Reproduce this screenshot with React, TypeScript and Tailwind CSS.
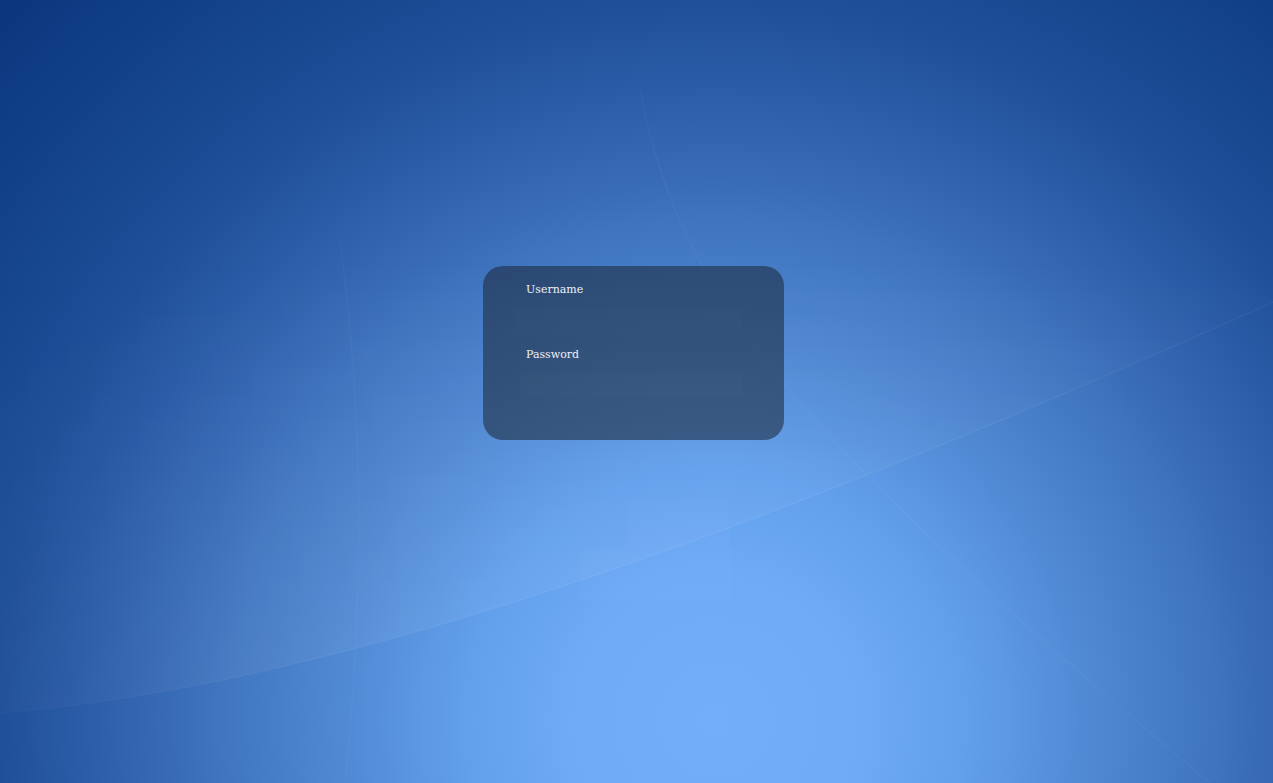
export default function App() {
  return (
    <div className="relative w-full h-[783px] overflow-hidden bg-[#2f64b2]" style={{ fontFamily: '"DejaVu Serif", "Liberation Serif", serif' }}>
      {/* Wallpaper */}
      <svg className="absolute inset-0 w-full h-full" viewBox="0 0 1273 783" preserveAspectRatio="none">
        <defs>
          <radialGradient id="bg" gradientUnits="userSpaceOnUse" cx="715" cy="720" r="1000">
            <stop offset="0" stopColor="#72aefa" />
            <stop offset="0.15" stopColor="#6eaaf6" />
            <stop offset="0.25" stopColor="#62a0ec" />
            <stop offset="0.38" stopColor="#5088d2" />
            <stop offset="0.48" stopColor="#4278c2" />
            <stop offset="0.56" stopColor="#3668b4" />
            <stop offset="0.64" stopColor="#2a5ba6" />
            <stop offset="0.72" stopColor="#1f4f98" />
            <stop offset="0.8" stopColor="#184890" />
            <stop offset="1" stopColor="#0b377e" />
          </radialGradient>
          <linearGradient id="sheen" gradientUnits="userSpaceOnUse" x1="0" y1="250" x2="0" y2="720">
            <stop offset="0" stopColor="#ffffff" stopOpacity="0" />
            <stop offset="1" stopColor="#ffffff" stopOpacity="0.07" />
          </linearGradient>
          <linearGradient id="sheenFade" gradientUnits="userSpaceOnUse" x1="0" y1="0" x2="420" y2="0">
            <stop offset="0" stopColor="#ffffff" stopOpacity="0.25" />
            <stop offset="1" stopColor="#ffffff" stopOpacity="1" />
          </linearGradient>
          <mask id="sheenMask">
            <rect x="0" y="0" width="1273" height="783" fill="url(#sheenFade)" />
          </mask>
        </defs>
        <rect x="0" y="0" width="1273" height="783" fill="url(#bg)" />
        <g mask="url(#sheenMask)">
          <path d="M0 0 L1273 0 L1273 302 C700 560 300 690 0 713 Z" fill="url(#sheen)" />
          <path d="M0 713 C300 690 700 560 1273 302" fill="none" stroke="#ffffff" strokeOpacity="0.05" strokeWidth="1.5" />
        </g>
        <path d="M640 90 C680 300 800 440 1210 783" fill="none" stroke="#ffffff" strokeOpacity="0.035" strokeWidth="1.5" />
        <path d="M340 240 Q375 500 345 783" fill="none" stroke="#ffffff" strokeOpacity="0.03" strokeWidth="1.5" />
        <rect x="628" y="500" width="102" height="48" fill="#ffffff" fillOpacity="0.02" />
        <rect x="580" y="548" width="153" height="52" fill="#ffffff" fillOpacity="0.02" />
      </svg>

      {/* Login */}
      <div className="relative pt-[266px] pl-[483px]">
        <div className="w-[301px] h-[174px] rounded-[20px] bg-[#1a2535]/55">
          <div className="pl-[43px] pt-[17px] text-[11px] leading-[13px] text-[#eef2f8]">Username</div>
          <div className="ml-[30px] mt-[12px] w-[229px] h-[26px] bg-white/[0.012]" />
          <div className="pl-[43px] mt-[14px] text-[11px] leading-[13px] text-[#eef2f8]">Password</div>
          <div className="ml-[37px] mt-[12px] w-[222px] h-[24px] bg-white/[0.01]" />
        </div>
      </div>
    </div>
  )
}
